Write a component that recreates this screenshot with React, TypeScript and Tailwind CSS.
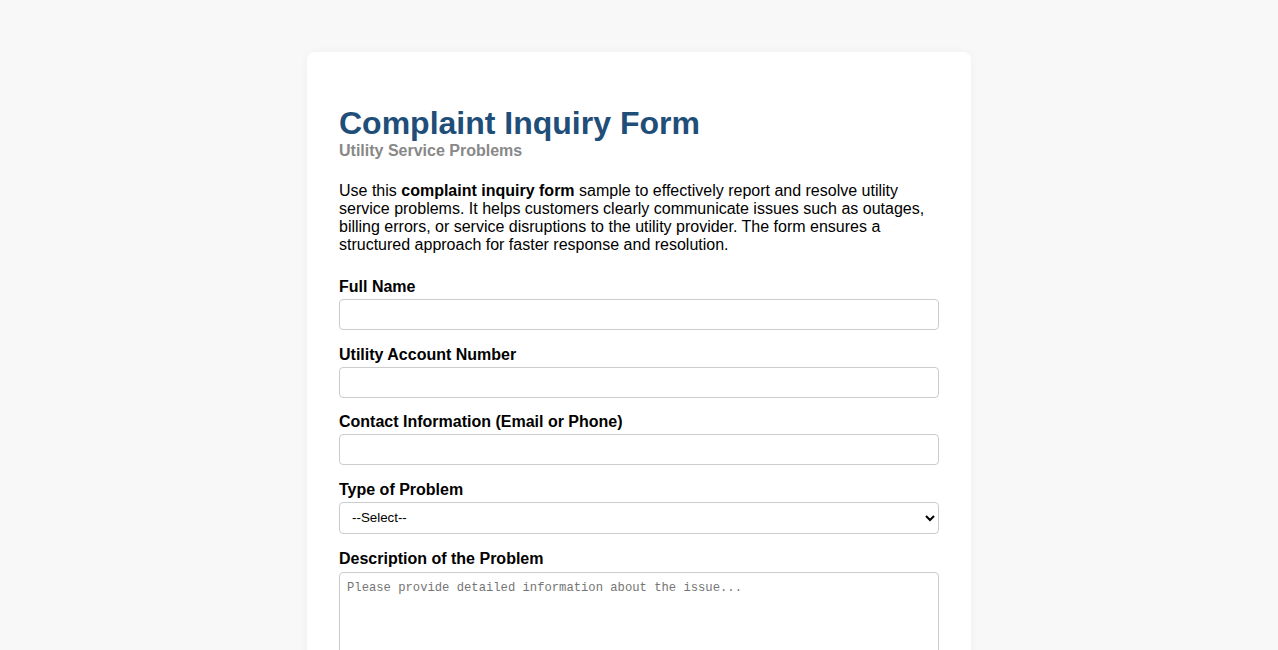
import React from 'react';

const fields = [
    { id: 'name', label: 'Full Name' },
    { id: 'account', label: 'Utility Account Number' },
    { id: 'contact', label: 'Contact Information (Email or Phone)' },
];

const App: React.FC = () => {
    return (
        <div className="min-h-screen bg-[#f8f8f8] pt-[52px] pb-10 font-['Liberation_Sans',Arial,sans-serif] text-black">
            <div className="mx-auto w-[664px] rounded-lg bg-white px-8 pt-8 pb-10 shadow-[0_0_10px_rgba(0,0,0,0.04)]">
                <h1 className="mt-[21px] text-[32px] font-bold leading-[37px] text-[#1f4e79]">Complaint Inquiry Form</h1>
                <p className="text-[16px] font-bold leading-[18px] text-[#888888]">Utility Service Problems</p>
                <p className="mt-[22px] text-[16px] leading-[18px]">
                    Use this <strong>complaint inquiry form</strong> sample to effectively report and resolve utility
                    service problems. It helps customers clearly communicate issues such as outages, billing errors,
                    or service disruptions to the utility provider. The form ensures a structured approach for faster
                    response and resolution.
                </p>

                <form className="mt-6">
                    {fields.map((f) => (
                        <div key={f.id} className="mb-[15.6px]">
                            <label htmlFor={f.id} className="block text-[16px] font-bold leading-[18px]">{f.label}</label>
                            <input
                                id={f.id}
                                type="text"
                                className="mt-[3px] block h-[31px] w-full rounded border border-[#cccccc] px-2 text-[14px]"
                            />
                        </div>
                    ))}

                    <div className="mb-4">
                        <label htmlFor="type" className="block text-[16px] font-bold leading-[18px]">Type of Problem</label>
                        <select
                            id="type"
                            className="mt-[3px] block h-[32px] w-full rounded border border-[#cccccc] bg-white px-2 text-[13.33px]"
                            defaultValue=""
                        >
                            <option value="">--Select--</option>
                            <option>Power Outage</option>
                            <option>Water Supply Issue</option>
                            <option>Billing Error</option>
                            <option>Service Disruption</option>
                            <option>Other</option>
                        </select>
                    </div>

                    <div className="mb-4">
                        <label htmlFor="desc" className="block text-[16px] font-bold leading-[18px]">Description of the Problem</label>
                        <textarea
                            id="desc"
                            rows={6}
                            placeholder="Please provide detailed information about the issue..."
                            className="mt-[4px] block h-[120px] w-full resize-y rounded border border-[#cccccc] px-[7px] pt-[6px] pb-2 font-['Liberation_Mono',monospace] text-[12.2px] placeholder:text-[#757575]"
                        />
                    </div>
                </form>
            </div>
        </div>
    );
};

export default App;
